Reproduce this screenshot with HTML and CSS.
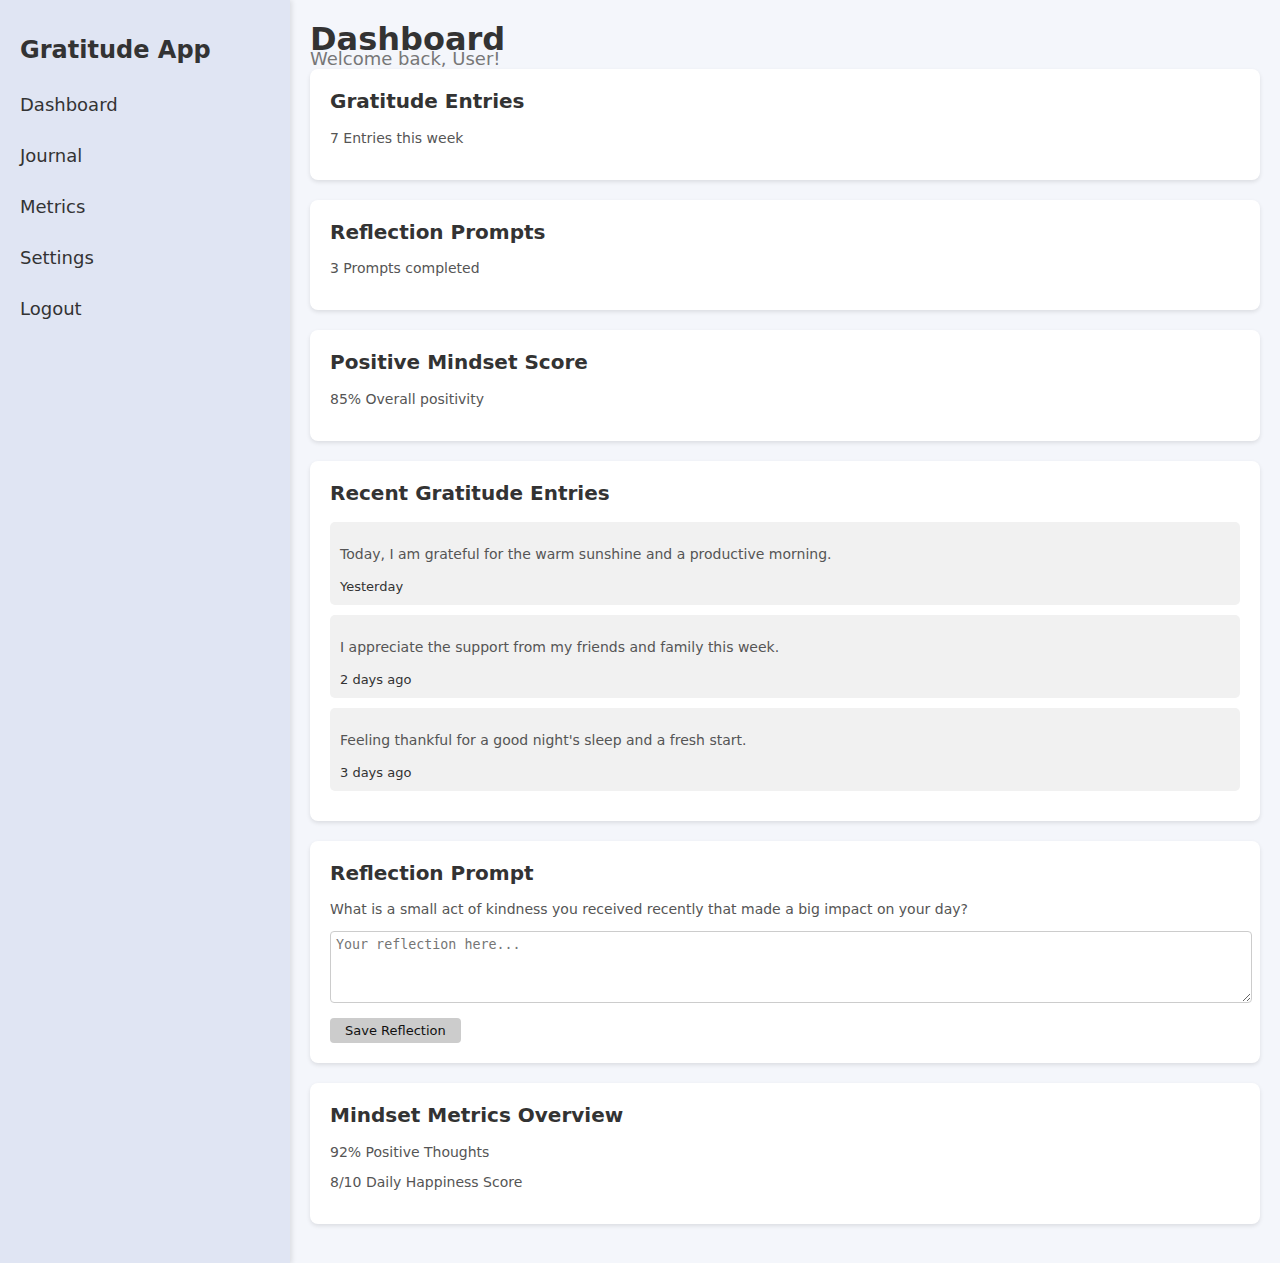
FILE: index.html
```html
<!DOCTYPE html>
<html lang="en">
<head>
<meta charset="utf-8">
<title>Gratitude App - Dashboard</title>
<link rel="stylesheet" href="styles.css">
</head>
<body>
<div class="layout">
  <aside class="sidebar">
    <h2 class="brand">Gratitude App</h2>
    <nav class="nav">
      <a href="#">Dashboard</a>
      <a href="#">Journal</a>
      <a href="#">Metrics</a>
      <a href="#">Settings</a>
      <a href="#">Logout</a>
    </nav>
  </aside>
  <main class="main">
    <header class="header">
      <h1 class="title">Dashboard</h1>
      <p class="subtitle">Welcome back, User!</p>
    </header>

    <section class="card">
      <h3 class="card-title">Gratitude Entries</h3>
      <p class="card-text">7 Entries this week</p>
    </section>

    <section class="card">
      <h3 class="card-title">Reflection Prompts</h3>
      <p class="card-text">3 Prompts completed</p>
    </section>

    <section class="card">
      <h3 class="card-title">Positive Mindset Score</h3>
      <p class="card-text">85% Overall positivity</p>
    </section>

    <section class="card">
      <h3 class="card-title">Recent Gratitude Entries</h3>
      <div class="entry">
        <p class="card-text">Today, I am grateful for the warm sunshine and a productive morning.</p>
        <span class="entry-date">Yesterday</span>
      </div>
      <div class="entry">
        <p class="card-text">I appreciate the support from my friends and family this week.</p>
        <span class="entry-date">2 days ago</span>
      </div>
      <div class="entry">
        <p class="card-text">Feeling thankful for a good night's sleep and a fresh start.</p>
        <span class="entry-date">3 days ago</span>
      </div>
    </section>

    <section class="card">
      <h3 class="card-title">Reflection Prompt</h3>
      <p class="card-text">What is a small act of kindness you received recently that made a big impact on your day?</p>
      <textarea class="reflection" placeholder="Your reflection here..."></textarea>
      <button class="save-btn" type="button">Save Reflection</button>
    </section>

    <section class="card">
      <h3 class="card-title">Mindset Metrics Overview</h3>
      <p class="card-text">92% Positive Thoughts</p>
      <p class="card-text">8/10 Daily Happiness Score</p>
    </section>
  </main>
</div>
</body>
</html>
```

FILE: styles.css
```css
html, body {
  margin: 0;
  padding: 0;
}

body {
  font-family: "DejaVu Sans", sans-serif;
  background: #f4f6fb;
  color: #333;
}

.layout {
  display: flex;
  align-items: stretch;
  min-height: 100vh;
}

.sidebar {
  flex: 0 0 250px;
  width: 250px;
  padding: 20px;
  background: #e0e5f3;
  box-shadow: 2px 0 5px rgba(0, 0, 0, 0.1);
  position: relative;
  z-index: 1;
}

.brand {
  font-size: 24px;
  font-weight: bold;
  color: #333;
  margin: 16px 0 0;
  line-height: normal;
}

.nav {
  display: flex;
  flex-direction: column;
  margin-top: 15px;
}

.nav a {
  display: block;
  padding: 15px 0;
  font-size: 18px;
  line-height: 21px;
  color: #333;
  text-decoration: none;
}

.main {
  flex: 1;
  padding: 20px;
  min-width: 0;
}

.header {
  margin: 0;
}

.title {
  font-size: 32px;
  font-weight: bold;
  margin: 0;
  line-height: normal;
  color: #333;
}

.subtitle {
  font-size: 18px;
  color: #777;
  margin: -10px 0 0;
  line-height: normal;
}

.card {
  background: #fff;
  border-radius: 8px;
  box-shadow: 0 2px 4px rgba(0, 0, 0, 0.1);
  padding: 20px;
  margin-bottom: 20px;
}

.card-title {
  font-size: 20px;
  font-weight: bold;
  color: #333;
  margin: 0 0 16.67px;
  line-height: normal;
}

.card-text {
  font-size: 14px;
  color: #555;
  margin: 14px 0;
  line-height: normal;
}

.entry {
  background: #f1f1f1;
  border-radius: 5px;
  padding: 10px;
  margin-bottom: 10px;
  font-size: 16px;
}

.entry-date {
  font-size: 13px;
  color: #333;
}

.reflection {
  display: block;
  width: 100%;
  height: 60px;
  padding: 5px;
  margin: 0 0 14.7px;
  border: 1px solid #ccc;
  border-radius: 4px;
  font-family: "DejaVu Sans Mono", monospace;
  font-size: 13.333px;
  color: #333;
  background: #fff;
}

.reflection::placeholder {
  color: #757575;
}

.save-btn {
  display: block;
  background: #ccc;
  border: 0;
  border-radius: 4px;
  padding: 5px 15px;
  font-family: "DejaVu Sans", sans-serif;
  font-size: 13px;
  line-height: 15px;
  color: #111;
  cursor: pointer;
}
```
